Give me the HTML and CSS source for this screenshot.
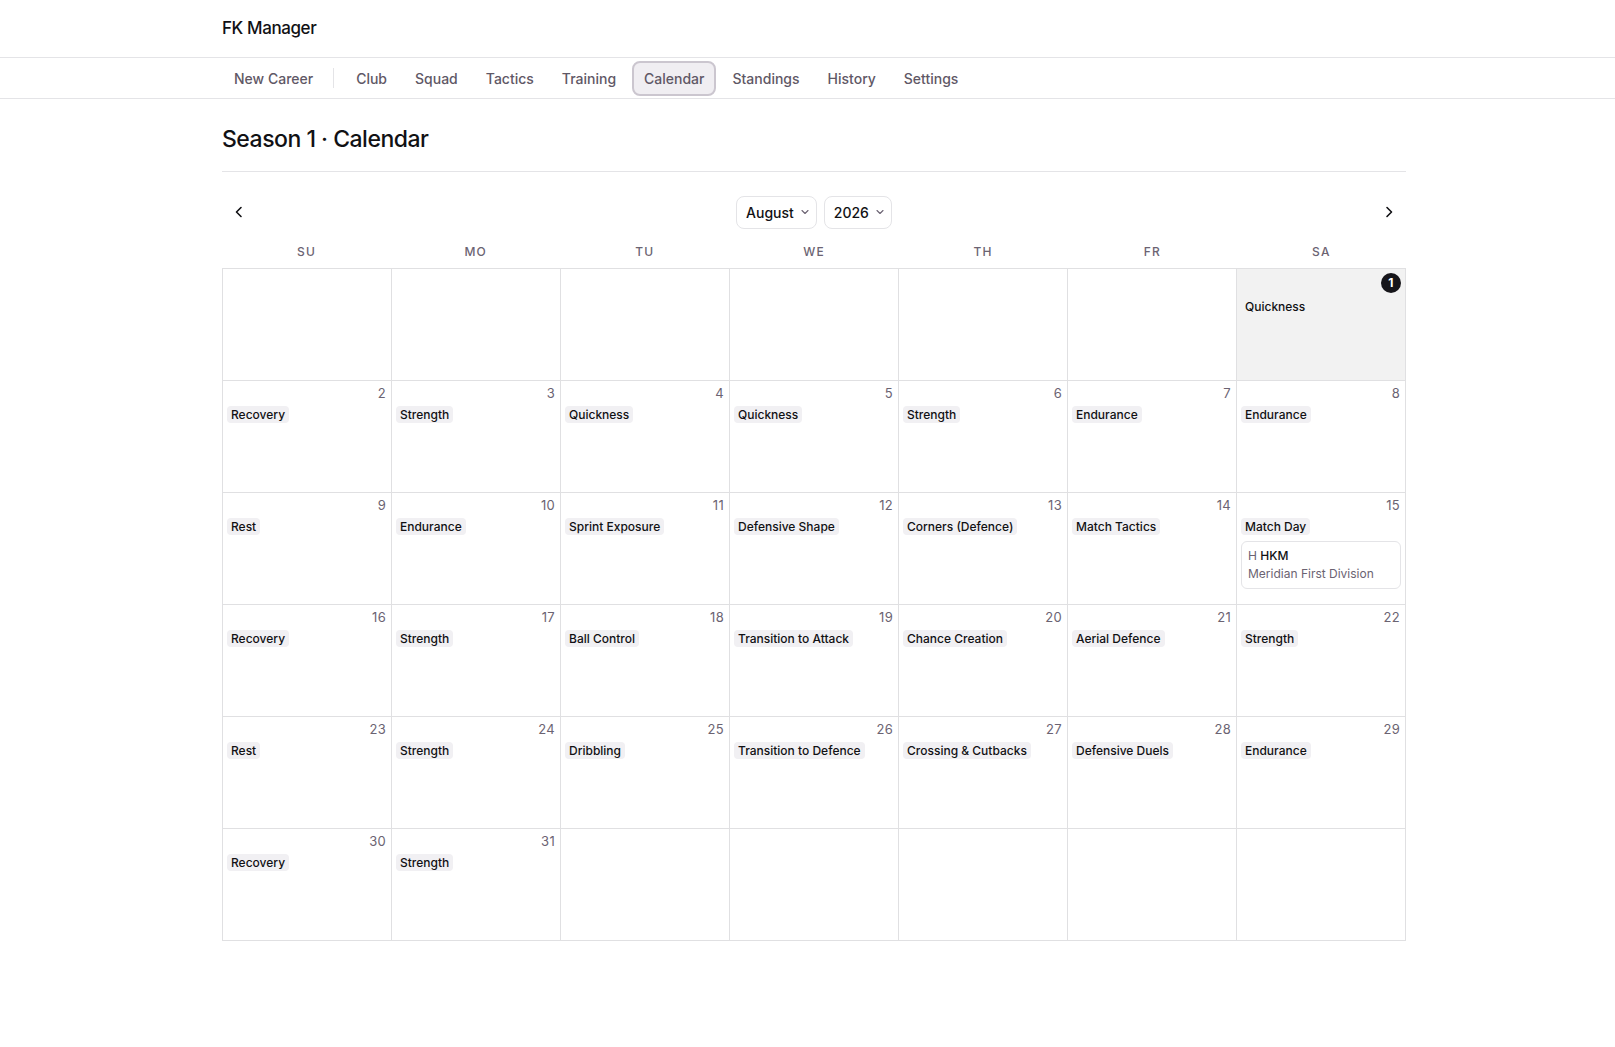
FILE: index.html
```html
<!DOCTYPE html>
<html lang="en">
<head>
    <meta charset="UTF-8">
    <meta name="viewport" content="width=device-width, initial-scale=1.0">
    <title>FK Manager · Calendar</title>
    <link rel="stylesheet" href="styles.css">
</head>
<body>
    <header class="topbar">
        <div class="wrap">
            <div class="brand">FK Manager</div>
        </div>
    </header>

    <nav class="tabs">
        <div class="wrap tabs-row">
            <a class="tab">New Career</a>
            <span class="tab-divider"></span>
            <a class="tab">Club</a>
            <a class="tab">Squad</a>
            <a class="tab">Tactics</a>
            <a class="tab">Training</a>
            <a class="tab active">Calendar</a>
            <a class="tab">Standings</a>
            <a class="tab">History</a>
            <a class="tab">Settings</a>
        </div>
    </nav>

    <main class="wrap">
        <h1 class="page-title">Season 1 · Calendar</h1>

        <section class="calendar">
            <div class="cal-toolbar">
                <button class="nav-btn" aria-label="Previous month">
                    <svg width="16" height="16" viewBox="0 0 16 16"><polyline points="10,3.5 5.5,8 10,12.5" fill="none" stroke="currentColor" stroke-width="1.6" stroke-linecap="round" stroke-linejoin="round"/></svg>
                </button>
                <div class="pickers">
                    <div class="picker">August
                        <svg width="10" height="10" viewBox="0 0 10 10"><polyline points="2,3.5 5,6.5 8,3.5" fill="none" stroke="currentColor" stroke-width="1.1" stroke-linecap="round" stroke-linejoin="round"/></svg>
                    </div>
                    <div class="picker">2026
                        <svg width="10" height="10" viewBox="0 0 10 10"><polyline points="2,3.5 5,6.5 8,3.5" fill="none" stroke="currentColor" stroke-width="1.1" stroke-linecap="round" stroke-linejoin="round"/></svg>
                    </div>
                </div>
                <button class="nav-btn" aria-label="Next month">
                    <svg width="16" height="16" viewBox="0 0 16 16"><polyline points="6,3.5 10.5,8 6,12.5" fill="none" stroke="currentColor" stroke-width="1.6" stroke-linecap="round" stroke-linejoin="round"/></svg>
                </button>
            </div>

            <div class="weekdays">
                <span>Su</span><span>Mo</span><span>Tu</span><span>We</span><span>Th</span><span>Fr</span><span>Sa</span>
            </div>

            <div class="month" id="month"></div>
        </section>
    </main>

    <script>
        // August 2026 training plan, indexed by day of month
        const plan = {
            1: "Quickness", 2: "Recovery", 3: "Strength", 4: "Quickness", 5: "Quickness",
            6: "Strength", 7: "Endurance", 8: "Endurance", 9: "Rest", 10: "Endurance",
            11: "Sprint Exposure", 12: "Defensive Shape", 13: "Corners (Defence)",
            14: "Match Tactics", 15: "Match Day", 16: "Recovery", 17: "Strength",
            18: "Ball Control", 19: "Transition to Attack", 20: "Chance Creation",
            21: "Aerial Defence", 22: "Strength", 23: "Rest", 24: "Strength",
            25: "Dribbling", 26: "Transition to Defence", 27: "Crossing & Cutbacks",
            28: "Defensive Duels", 29: "Endurance", 30: "Recovery", 31: "Strength"
        };
        const fixtures = {
            15: { venue: "H", opponent: "HKM", competition: "Meridian First Division" }
        };
        const today = 1;
        const firstWeekday = 6; // 1 Aug 2026 is a Saturday
        const daysInMonth = 31;

        const month = document.getElementById("month");

        for (let i = 0; i < 42; i++) {
            const day = i - firstWeekday + 1;
            const cell = document.createElement("div");
            cell.className = "day";

            if (day >= 1 && day <= daysInMonth) {
                const head = document.createElement("div");
                head.className = "day-head";
                const num = document.createElement("span");
                num.className = "day-num";
                num.textContent = day;
                if (day === today) {
                    cell.classList.add("today");
                    num.classList.add("badge");
                }
                head.appendChild(num);
                cell.appendChild(head);

                if (plan[day]) {
                    const pill = document.createElement("span");
                    pill.className = "session";
                    pill.textContent = plan[day];
                    cell.appendChild(pill);
                }

                const fx = fixtures[day];
                if (fx) {
                    const card = document.createElement("div");
                    card.className = "fixture";
                    card.innerHTML =
                        '<div><span class="venue">' + fx.venue + '</span> <span class="opponent">' + fx.opponent + '</span></div>' +
                        '<div class="competition">' + fx.competition + '</div>';
                    cell.appendChild(card);
                }
            }

            month.appendChild(cell);
        }
    </script>
</body>
</html>
```

FILE: styles.css
```css
:root {
    --text-primary: #111114;
    --text-muted: #5f5866;
    --text-soft: #6b6372;
    --border-color: #e4e4e7;
    --grid-line: #e0e0e2;
    --pill-bg: #f1f0f3;
    --today-bg: #f2f2f2;
    --active-bg: #f0eef2;
    --active-border: #cbc6cf;
}

* {
    margin: 0;
    padding: 0;
    box-sizing: border-box;
}

body {
    font-family: 'Inter', 'Noto Sans', sans-serif;
    background: #ffffff;
    color: var(--text-primary);
    padding-left: 13px;
}

.wrap {
    width: 1184px;
    margin: 0 auto;
}

.topbar,
.tabs {
    margin-left: -13px;
    padding-left: 13px;
}

/* Top bar */
.topbar {
    height: 58px;
    border-bottom: 1px solid var(--border-color);
    display: flex;
    align-items: center;
}

.brand {
    font-size: 17px;
    font-weight: 500;
    letter-spacing: -0.4px;
    padding-bottom: 2px;
}

/* Section tabs */
.tabs {
    height: 41px;
    border-bottom: 1px solid var(--border-color);
}

.tabs-row {
    height: 100%;
    display: flex;
    align-items: center;
    gap: 4px;
}

.tab {
    font-size: 14px;
    font-weight: 500;
    color: var(--text-muted);
    padding: 0 12px;
    height: 35px;
    display: flex;
    align-items: center;
    border-radius: 8px;
    cursor: pointer;
}

.tab.active {
    background: var(--active-bg);
    border: 2px solid var(--active-border);
    padding: 0 10px;
}

.tab-divider {
    width: 1px;
    height: 20px;
    background: var(--border-color);
    margin: 0 6px 0 4px;
}

/* Page heading */
.page-title {
    font-size: 23px;
    font-weight: 500;
    letter-spacing: -0.5px;
    line-height: 32px;
    margin-top: 24px;
    padding-bottom: 16px;
    border-bottom: 1px solid var(--border-color);
}

/* Calendar */
.calendar {
    margin-top: 23px;
}

.cal-toolbar {
    display: flex;
    align-items: center;
    justify-content: space-between;
    height: 34px;
    margin-bottom: 15px;
}

.nav-btn {
    width: 34px;
    height: 34px;
    border: none;
    background: none;
    color: var(--text-primary);
    display: flex;
    align-items: center;
    justify-content: center;
    cursor: pointer;
}

.pickers {
    display: flex;
    gap: 7px;
}

.picker {
    height: 33px;
    display: flex;
    align-items: center;
    gap: 6px;
    padding: 0 6px 0 9px;
    border: 1px solid var(--border-color);
    border-radius: 8px;
    font-size: 14px;
    font-weight: 500;
}

.picker svg {
    color: var(--text-soft);
}

.weekdays {
    display: grid;
    grid-template-columns: repeat(7, 1fr);
    height: 16px;
    margin-bottom: 8px;
}

.weekdays span {
    text-align: center;
    text-transform: uppercase;
    font-size: 12px;
    font-weight: 500;
    letter-spacing: 0.1em;
    line-height: 16px;
    color: var(--text-soft);
}

.month {
    display: grid;
    grid-template-columns: repeat(7, 1fr);
    grid-auto-rows: 112px;
    border-top: 1px solid var(--grid-line);
    border-left: 1px solid var(--grid-line);
}

.day {
    border-right: 1px solid var(--grid-line);
    border-bottom: 1px solid var(--grid-line);
    padding: 3px 4px 4px;
    display: flex;
    flex-direction: column;
    align-items: flex-start;
}

.day.today {
    background: var(--today-bg);
}

.day-head {
    align-self: stretch;
    display: flex;
    justify-content: flex-end;
    height: 18px;
    margin-bottom: 4px;
}

.day-num {
    font-size: 13px;
    line-height: 18px;
    color: var(--text-soft);
    letter-spacing: 0.3px;
    padding-right: 1px;
}

.today .day-head {
    height: 21px;
    margin-bottom: 5px;
}

.day-num.badge {
    width: 20px;
    height: 20px;
    border-radius: 50%;
    background: #16151a;
    color: #ffffff;
    font-size: 12px;
    font-weight: 700;
    line-height: 20px;
    text-align: center;
    padding: 0;
    margin-top: 1px;
}

.session {
    font-size: 12px;
    font-weight: 500;
    line-height: 17px;
    padding: 0 4px;
    background: var(--pill-bg);
    border-radius: 4px;
    white-space: nowrap;
}

.today .session {
    background: transparent;
}

.fixture {
    align-self: stretch;
    margin-top: 6px;
    border: 1px solid var(--border-color);
    border-radius: 6px;
    padding: 5px 6px;
    font-size: 12px;
    line-height: 18px;
}

.venue {
    color: var(--text-soft);
}

.opponent {
    font-weight: 500;
}

.competition {
    color: var(--text-soft);
}
```
